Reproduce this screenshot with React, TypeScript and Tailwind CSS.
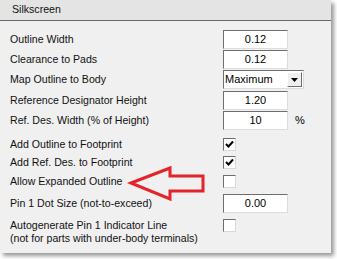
import React from "react";

const font = { fontFamily: '"Liberation Sans", Arial, sans-serif' };

function TextBox({ value }: { value: string }) {
  return (
    <div className="w-[65px] h-[19px] bg-white border border-t-[#6d6d6d] border-l-[#6d6d6d] border-r-[#dcdcdc] border-b-[#dcdcdc] flex items-center justify-center text-[11px] text-black">
      {value}
    </div>
  );
}

function Check({ checked }: { checked?: boolean }) {
  return (
    <div className="w-[13px] h-[13px] bg-white border border-t-[#6d6d6d] border-l-[#6d6d6d] border-r-[#d8d8d8] border-b-[#d8d8d8] flex items-center justify-center">
      {checked && (
        <svg width="9" height="9" viewBox="0 0 9 9">
          <path d="M1 4 L3.5 6.5 L8 1.5" stroke="#000" strokeWidth="2" fill="none" />
        </svg>
      )}
    </div>
  );
}

function Row({ label, children, className = "" }: { label: React.ReactNode; children?: React.ReactNode; className?: string }) {
  return (
    <div className={`flex items-center ${className}`}>
      <div className="w-[223px] pl-[10px] text-[10.6px] text-[#111] leading-[13px]">{label}</div>
      {children}
    </div>
  );
}

export default function App() {
  return (
    <div className="w-[337px] h-[259px] bg-white relative" style={font}>
      <div className="w-[331px] h-[253px] bg-[#f0f0f0] shadow-[3px_3px_4px_rgba(0,0,0,0.4)] flex flex-col">
        <div className="h-[21px] bg-[#e4e4e4] border-b border-[#6b6b6b] flex items-center pl-[12px] text-[10.6px] text-[#111]">
          Silkscreen
        </div>
        <Row label="Outline Width" className="mt-[9px] h-[19px]">
          <TextBox value="0.12" />
        </Row>
        <Row label="Clearance to Pads" className="mt-[1px] h-[19px]">
          <TextBox value="0.12" />
        </Row>
        <Row label="Map Outline to Body" className="mt-[1px] h-[19px]">
          <div className="w-[81px] h-[19px] bg-white border border-t-[#6d6d6d] border-l-[#6d6d6d] border-r-[#dcdcdc] border-b-[#dcdcdc] flex items-center text-[11px] text-black">
            <span className="flex-1 pl-[1px]">Maximum</span>
            <div className="w-[15px] h-[15px] mr-[1px] bg-[#f0f0f0] border border-t-[#ffffff] border-l-[#ffffff] border-r-[#6d6d6d] border-b-[#6d6d6d] flex items-center justify-center">
              <svg width="7" height="4" viewBox="0 0 7 4">
                <path d="M0 0 H7 L3.5 4 Z" fill="#000" />
              </svg>
            </div>
          </div>
        </Row>
        <Row label="Reference Designator Height" className="mt-[2px] h-[19px]">
          <TextBox value="1.20" />
        </Row>
        <Row label="Ref. Des. Width (% of Height)" className="mt-[1px] h-[19px]">
          <TextBox value="10" />
          <span className="ml-[7px] text-[11px] text-black">%</span>
        </Row>
        <Row label="Add Outline to Footprint" className="mt-[5px] h-[18px]">
          <Check checked />
        </Row>
        <Row label="Add Ref. Des. to Footprint" className="h-[18px]">
          <Check checked />
        </Row>
        <Row label="Allow Expanded Outline" className="mt-[1px] h-[18px]">
          <Check />
        </Row>
        <Row label="Pin 1 Dot Size (not-to-exceed)" className="mt-[4px] h-[19px]">
          <TextBox value="0.00" />
        </Row>
        <div className="flex items-start mt-[6px]">
          <div className="w-[223px] pl-[10px] text-[10.6px] text-[#111] leading-[13px]">
            Autogenerate Pin 1 Indicator Line
            <br />
            (not for parts with under-body terminals)
          </div>
          <Check />
        </div>
      </div>
      <svg className="absolute left-0 top-0 pointer-events-none" width="337" height="259">
        <path
          d="M131 183 L170 168 L170 176 L203 176 L203 191 L170 191 L170 199 Z"
          stroke="#e4232b"
          strokeWidth="3"
          fill="none"
          strokeLinejoin="miter"
        />
      </svg>
    </div>
  );
}
